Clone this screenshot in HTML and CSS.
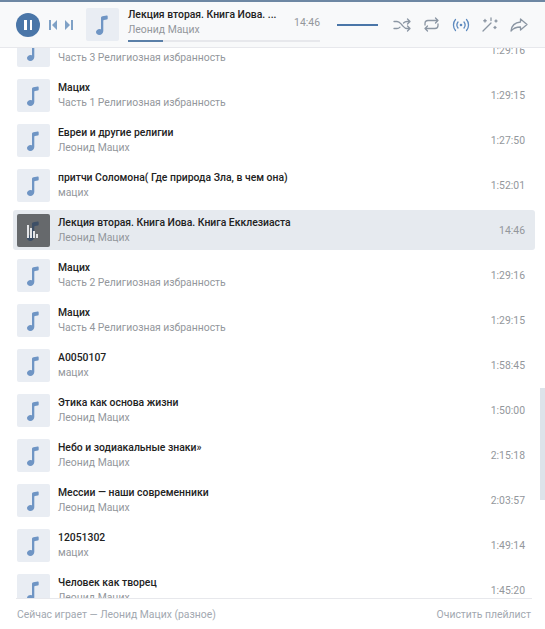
FILE: index.html
```html
<!DOCTYPE html>
<html lang="ru">
<head>
    <meta charset="UTF-8">
    <meta name="viewport" content="width=device-width, initial-scale=1.0">
    <title>Плейлист</title>
    <link rel="stylesheet" href="styles.css">
</head>
<body>
    <svg class="defs" width="0" height="0">
        <symbol id="note" viewBox="0 0 33 33">
            <path d="M15 22.5V10c0-1 .6-1.500 1.500-1.700l4.200-.7c.7-.1 1 .2 1 .8v2c0 .6-.3.9-.9 1l-2.800.5c-.5.1-.7.3-.7.8V23c0 2.300-1.800 4-4 4-1.800 0-3.300-1.200-3.300-2.900 0-1.900 1.700-3.200 3.600-3.200.9 0 1.700.2 2.400.6z"/>
        </symbol>
    </svg>

    <div class="player">
        <header class="topbar">
            <button class="play"><span></span><span></span></button>
            <svg class="skip" width="8" height="10" viewBox="0 0 8 10"><path d="M0 0h2v10H0zM8 0v10L3 5z"/></svg>
            <svg class="skip next" width="8" height="10" viewBox="0 0 8 10"><path d="M8 0H6v10h2zM0 0v10l5-5z"/></svg>
            <svg class="cover now-cover"><use href="#note"/></svg>
            <div class="now">
                <div class="now-head">
                    <div>
                        <div class="now-title">Лекция вторая. Книга Иова. ...</div>
                        <div class="now-artist">Леонид Мацих</div>
                    </div>
                    <div class="now-time">14:46</div>
                </div>
                <div class="progress"><div class="progress-done"></div></div>
            </div>
            <div class="volume"></div>
            <div class="controls">
                <svg class="ctl" width="18" height="14" viewBox="0 0 18 14"><path d="M1 3.500h3c2.500 0 3.500 2 5 3.500s2.500 3.500 5 3.500h2M1 10.500h3c1.300 0 2.200-.6 3-1.400M10.500 5c.8-.8 1.700-1.500 3.500-1.500h2M14.500 1l2.500 2.500L14.500 6M14.500 8l2.500 2.500L14.500 13"/></svg>
                <svg class="ctl" width="17" height="15" viewBox="0 0 17 15"><path d="M2 8V6.500C2 4.500 3.300 3.500 5 3.500h10M12.500 1L15 3.500 12.500 6M15 7v1.500c0 2-1.300 3-3 3H2M4.500 9L2 11.500 4.500 14"/></svg>
                <svg class="ctl on" width="18" height="14" viewBox="0 0 18 14"><path d="M3.500 1.500C.8 4.500.8 9.500 3.500 12.500M14.500 1.500c2.700 3 2.700 8 0 11M6 4c-1.300 1.700-1.300 4.300 0 6M12 4c1.300 1.700 1.300 4.300 0 6"/><circle class="dot" cx="9" cy="7" r="1.300"/></svg>
                <svg class="ctl" width="16" height="15" viewBox="0 0 16 15"><path d="M1 14L9 6M3 2.500v2.500M1.800 3.750h2.400M9 1v2.500M14 3v2M13 4h2M13 9.500v2M12 10.500h2"/></svg>
                <svg class="ctl" width="18" height="14" viewBox="0 0 18 14"><path d="M10.500 1L17 6.500 10.500 12V9C6.500 9 3.500 10 1 13c.5-4.500 3.500-8.500 9.500-9z"/></svg>
            </div>
        </header>

        <div class="scrollbar"></div>

        <main class="list">
            <div class="row first">
                <svg class="cover"><use href="#note"/></svg>
                <div class="info"><div class="title">Мацих</div><div class="sub">Часть 3 Религиозная избранность</div></div>
                <div class="time">1:29:16</div>
            </div>
            <div class="row">
                <svg class="cover"><use href="#note"/></svg>
                <div class="info"><div class="title">Мацих</div><div class="sub">Часть 1 Религиозная избранность</div></div>
                <div class="time">1:29:15</div>
            </div>
            <div class="row">
                <svg class="cover"><use href="#note"/></svg>
                <div class="info"><div class="title">Евреи и другие религии</div><div class="sub">Леонид Мацих</div></div>
                <div class="time">1:27:50</div>
            </div>
            <div class="row">
                <svg class="cover"><use href="#note"/></svg>
                <div class="info"><div class="title">притчи Соломона( Где природа Зла, в чем она)</div><div class="sub">мацих</div></div>
                <div class="time">1:52:01</div>
            </div>
            <div class="row active">
                <div class="cover-wrap">
                    <svg class="cover"><use href="#note"/></svg>
                    <div class="bars"><i class="b1"></i><i class="b2"></i><i class="b3"></i><i class="b4"></i></div>
                </div>
                <div class="info"><div class="title">Лекция вторая. Книга Иова. Книга Екклезиаста</div><div class="sub">Леонид Мацих</div></div>
                <div class="time">14:46</div>
            </div>
            <div class="row">
                <svg class="cover"><use href="#note"/></svg>
                <div class="info"><div class="title">Мацих</div><div class="sub">Часть 2 Религиозная избранность</div></div>
                <div class="time">1:29:16</div>
            </div>
            <div class="row">
                <svg class="cover"><use href="#note"/></svg>
                <div class="info"><div class="title">Мацих</div><div class="sub">Часть 4 Религиозная избранность</div></div>
                <div class="time">1:29:15</div>
            </div>
            <div class="row">
                <svg class="cover"><use href="#note"/></svg>
                <div class="info"><div class="title">A0050107</div><div class="sub">мацих</div></div>
                <div class="time">1:58:45</div>
            </div>
            <div class="row">
                <svg class="cover"><use href="#note"/></svg>
                <div class="info"><div class="title">Этика как основа жизни</div><div class="sub">Леонид Мацих</div></div>
                <div class="time">1:50:00</div>
            </div>
            <div class="row">
                <svg class="cover"><use href="#note"/></svg>
                <div class="info"><div class="title">Небо и зодиакальные знаки»</div><div class="sub">Леонид Мацих</div></div>
                <div class="time">2:15:18</div>
            </div>
            <div class="row">
                <svg class="cover"><use href="#note"/></svg>
                <div class="info"><div class="title">Мессии — наши современники</div><div class="sub">Леонид Мацих</div></div>
                <div class="time">2:03:57</div>
            </div>
            <div class="row">
                <svg class="cover"><use href="#note"/></svg>
                <div class="info"><div class="title">12051302</div><div class="sub">мацих</div></div>
                <div class="time">1:49:14</div>
            </div>
            <div class="row">
                <svg class="cover"><use href="#note"/></svg>
                <div class="info"><div class="title">Человек как творец</div><div class="sub">Леонид Мацих</div></div>
                <div class="time">1:45:20</div>
            </div>
        </main>

        <footer class="footer">
            <span>Сейчас играет — Леонид Мацих (разное)</span>
            <span>Очистить плейлист</span>
        </footer>
    </div>
</body>
</html>
```

FILE: styles.css
```css
body {
    margin: 0;
    background: #fff;
    font-family: Roboto, "Noto Sans", sans-serif;
    font-size: 10.4px;
    color: #222;
}
.defs {
    display: block;
}
.player {
    position: relative;
    display: flex;
    flex-direction: column;
    width: 545px;
    height: 629px;
    overflow: hidden;
}
.topbar {
    display: flex;
    align-items: center;
    flex: none;
    box-sizing: border-box;
    height: 48px;
    padding: 0 0 0 16px;
    background: #f8f9fa;
    border-top: 2px solid #6d87a3;
    border-bottom: 1px solid #e7e8ec;
}
.play {
    display: flex;
    align-items: center;
    justify-content: center;
    gap: 3px;
    width: 24px;
    height: 24px;
    padding: 0;
    border: none;
    border-radius: 50%;
    background: #4a76a8;
}
.play span {
    width: 2.5px;
    height: 10px;
    background: #fff;
}
.skip {
    margin-left: 9px;
    fill: #7fa1c6;
}
.skip.next {
    margin-left: 8px;
}
.cover {
    display: block;
    flex: none;
    width: 33px;
    height: 33px;
    background: #e9edf3;
    border-radius: 2px;
    fill: #6f95c4;
}
.now-cover {
    margin-left: 13px;
}
.now {
    width: 192px;
    margin-left: 9px;
}
.now-head {
    display: flex;
    justify-content: space-between;
    align-items: center;
}
.now-title {
    font-weight: 500;
    line-height: 14px;
}
.now-artist {
    margin-top: 1px;
    line-height: 14px;
    color: #93979c;
}
.now-time {
    color: #93979c;
}
.progress {
    height: 2px;
    margin-top: 3px;
    background: #e7e8ec;
}
.progress-done {
    width: 35px;
    height: 2px;
    background: #5a7fa8;
}
.volume {
    width: 41px;
    height: 2px;
    margin-left: 17px;
    background: #4a76a8;
}
.controls {
    display: flex;
    align-items: center;
    gap: 12px;
    margin-left: 15px;
}
.ctl {
    fill: none;
    stroke: #8b96a3;
    stroke-width: 1.3;
    stroke-linejoin: round;
    stroke-linecap: round;
}
.ctl.on {
    stroke: #5d8abf;
}
.ctl .dot {
    fill: #5d8abf;
    stroke: none;
}
.list {
    flex: 1;
    min-height: 0;
    overflow: hidden;
    padding: 0 10px 0 13px;
}
.row {
    display: flex;
    align-items: center;
    height: 40px;
    margin-bottom: 5px;
    padding: 0 10px 0 4px;
    box-sizing: border-box;
    border-radius: 3px;
}
.row.first {
    margin-top: -18px;
}
.row.active {
    background: #e6eaef;
}
.cover-wrap {
    position: relative;
    flex: none;
}
.row.active .cover {
    background: #66696c;
    fill: #3d4f66;
}
.bars {
    position: absolute;
    left: 10px;
    bottom: 9px;
    display: flex;
    align-items: flex-end;
    gap: 1px;
}
.bars i {
    display: block;
    width: 2px;
    background: #e4e6e9;
}
.b1 { height: 13px; }
.b2 { height: 10px; }
.b3 { height: 7px; }
.b4 { height: 4px; }
.info {
    flex: 1;
    min-width: 0;
    margin-left: 8px;
}
.title {
    line-height: 15px;
    font-weight: 500;
}
.sub {
    line-height: 15px;
    color: #93979c;
}
.time {
    color: #93979c;
}
.scrollbar {
    position: absolute;
    top: 388px;
    right: 0;
    width: 5px;
    height: 112px;
    background: #dde3ea;
}
.footer {
    display: flex;
    justify-content: space-between;
    align-items: center;
    flex: none;
    height: 30px;
    margin: 0 13px 0 16px;
    padding: 0 1px;
    border-top: 1px solid #e7e8ec;
    background: #fff;
    color: #a2a8b0;
}
```
